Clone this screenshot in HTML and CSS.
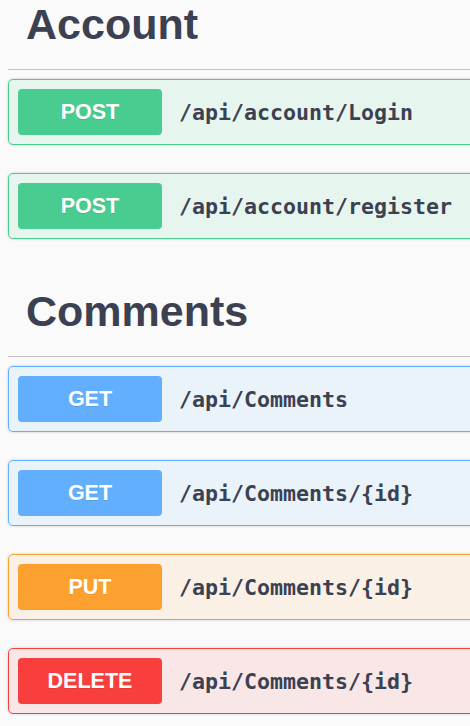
FILE: index.html
```html
<!DOCTYPE html>
<html lang="en">
<head>
    <meta charset="UTF-8">
    <meta name="viewport" content="width=device-width, initial-scale=1.0">
    <title>API</title>
    <link rel="stylesheet" href="styles.css">
</head>
<body>
    <div class="page">
        <div class="tag-section first">
            <h3 class="opblock-tag"><span>Account</span></h3>
            <div class="opblock opblock-post">
                <span class="method">POST</span>
                <span class="path">/api/account/Login</span>
            </div>
            <div class="opblock opblock-post">
                <span class="method">POST</span>
                <span class="path">/api/account/register</span>
            </div>
        </div>

        <div class="tag-section">
            <h3 class="opblock-tag"><span>Comments</span></h3>
            <div class="opblock opblock-get">
                <span class="method">GET</span>
                <span class="path">/api/Comments</span>
            </div>
            <div class="opblock opblock-get">
                <span class="method">GET</span>
                <span class="path">/api/Comments/{id}</span>
            </div>
            <div class="opblock opblock-put">
                <span class="method">PUT</span>
                <span class="path">/api/Comments/{id}</span>
            </div>
            <div class="opblock opblock-delete">
                <span class="method">DELETE</span>
                <span class="path">/api/Comments/{id}</span>
            </div>
        </div>
    </div>
</body>
</html>
```

FILE: styles.css
```css
* { margin: 0; padding: 0; box-sizing: border-box; }
body {
    background: #fafafa;
    font-family: "Liberation Sans", Arial, sans-serif;
    color: #3b4151;
    overflow: hidden;
}
.page {
    width: 720px;
    padding: 0 8px;
}
.tag-section.first {
    margin-top: -20px;
}
.opblock-tag {
    display: flex;
    align-items: center;
    padding: 18px 36px 18px 18px;
    margin-bottom: 9px;
    border-bottom: 1px solid rgba(59, 65, 81, 0.3);
    font-size: 43px;
    line-height: 53px;
    font-weight: bold;
}
.opblock {
    display: flex;
    align-items: center;
    padding: 9px;
    margin-bottom: 28px;
    border: 1px solid;
    border-radius: 5px;
    box-shadow: 0 0 3px rgba(0, 0, 0, 0.19);
}
.method {
    width: 144px;
    padding: 10px 0;
    line-height: 26px;
    border-radius: 4px;
    text-align: center;
    font-size: 21.5px;
    font-weight: bold;
    color: #fff;
    text-shadow: 0 1px 0 rgba(0, 0, 0, 0.1);
}
.path {
    padding: 0 17px;
    font-family: "DejaVu Sans Mono", monospace;
    font-size: 21.6px;
    font-weight: bold;
    color: #3b4151;
}
.opblock-post { background: rgba(73, 204, 144, 0.1); border-color: #49cc90; }
.opblock-post .method { background: #49cc90; }
.opblock-get { background: rgba(97, 175, 254, 0.1); border-color: #61affe; }
.opblock-get .method { background: #61affe; }
.opblock-put { background: rgba(252, 161, 48, 0.1); border-color: #fca130; }
.opblock-put .method { background: #fca130; }
.opblock-delete { background: rgba(249, 62, 62, 0.1); border-color: #f93e3e; }
.opblock-delete .method { background: #f93e3e; }
```
